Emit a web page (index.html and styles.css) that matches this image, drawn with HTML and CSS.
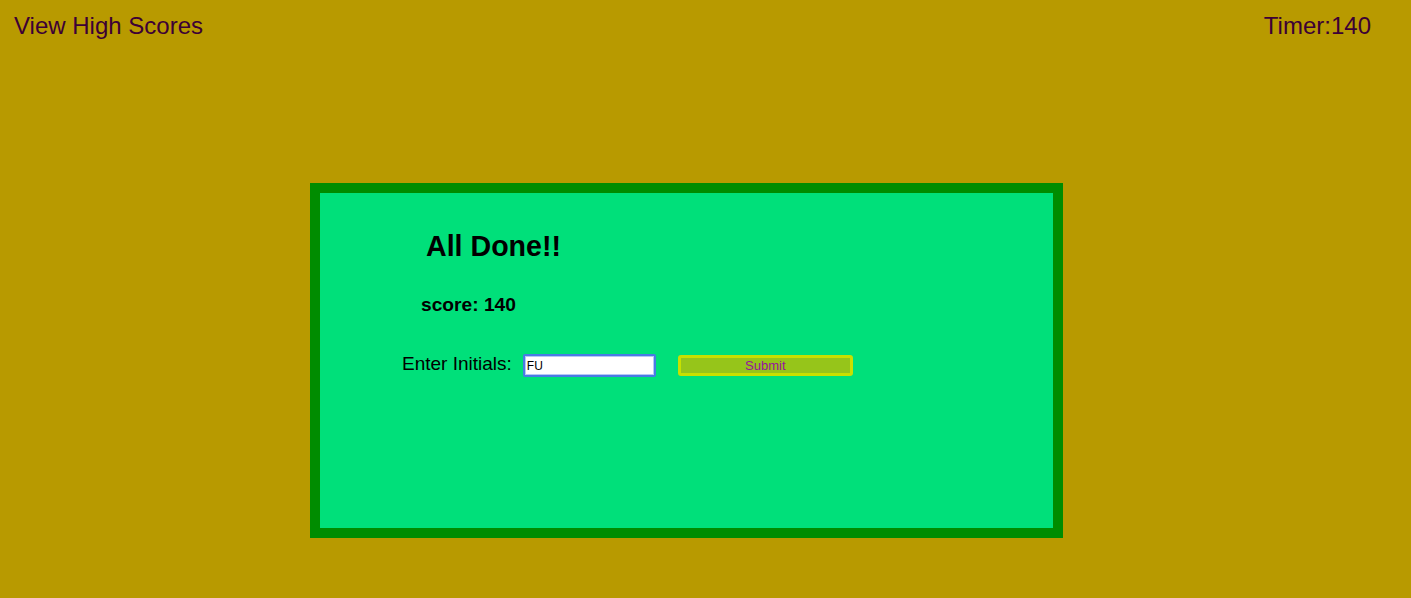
FILE: index.html
```html
<!DOCTYPE html>
<html lang="en">
<head>
<meta charset="utf-8">
<title>Quiz</title>
<link rel="stylesheet" href="styles.css">
</head>
<body>
<header class="topbar">
  <a class="highscores">View High Scores</a>
  <span class="timer">Timer:140</span>
</header>
<main class="card">
  <h1 class="title">All Done!!</h1>
  <p class="score">score: 140</p>
  <form class="initials-row">
    <label class="initials-label" for="initials">Enter Initials:</label>
    <input class="initials-input" id="initials" type="text" value="FU">
    <button class="submit-btn" type="button">Submit</button>
  </form>
</main>
</body>
</html>
```
FILE: styles.css
```css
html, body {
  margin: 0;
  padding: 0;
}
body {
  background: #b89a00;
  font-family: "Liberation Sans", Arial, Helvetica, sans-serif;
  height: 598px;
  overflow: hidden;
}
.topbar {
  display: flex;
  justify-content: space-between;
  padding: 12px 40px 0 14px;
  height: 28px;
  line-height: 28px;
  font-size: 24px;
  color: #3c0035;
}
.highscores {
  color: #3c0035;
  text-decoration: none;
}
.card {
  box-sizing: border-box;
  width: 753px;
  height: 355px;
  margin: 143px 0 0 310px;
  border: 10px solid #008c00;
  background: #00e07a;
  display: flex;
  flex-direction: column;
  align-items: flex-start;
}
.title {
  margin: 37px 0 0 106px;
  font-size: 28.6px;
  line-height: 32px;
  font-weight: bold;
  color: #000;
}
.score {
  margin: 32px 0 0 101px;
  font-size: 19.2px;
  line-height: 22px;
  font-weight: bold;
  color: #000;
}
.initials-row {
  display: flex;
  align-items: flex-start;
  margin: 38px 0 0 82px;
}
.initials-label {
  font-size: 19px;
  line-height: 19px;
  color: #000;
  margin-right: 11px;
}
.initials-input {
  box-sizing: border-box;
  width: 133px;
  height: 23px;
  margin: 0;
  padding: 0 2px;
  border: 2px solid #4a7ae4;
  border-radius: 2px;
  box-shadow: inset 0 0 0 1px #b4c8f4;
  background: #fff;
  font-family: "Liberation Sans", Arial, sans-serif;
  font-size: 12px;
  color: #000;
  outline: none;
}
.submit-btn {
  box-sizing: border-box;
  width: 175px;
  height: 21px;
  margin: 1px 0 0 22px;
  padding: 0;
  border: 3px solid #c8e000;
  border-radius: 3px;
  background: #96c51a;
  color: #96129e;
  font-family: "Liberation Sans", Arial, sans-serif;
  font-size: 13px;
  line-height: 15px;
}
```
